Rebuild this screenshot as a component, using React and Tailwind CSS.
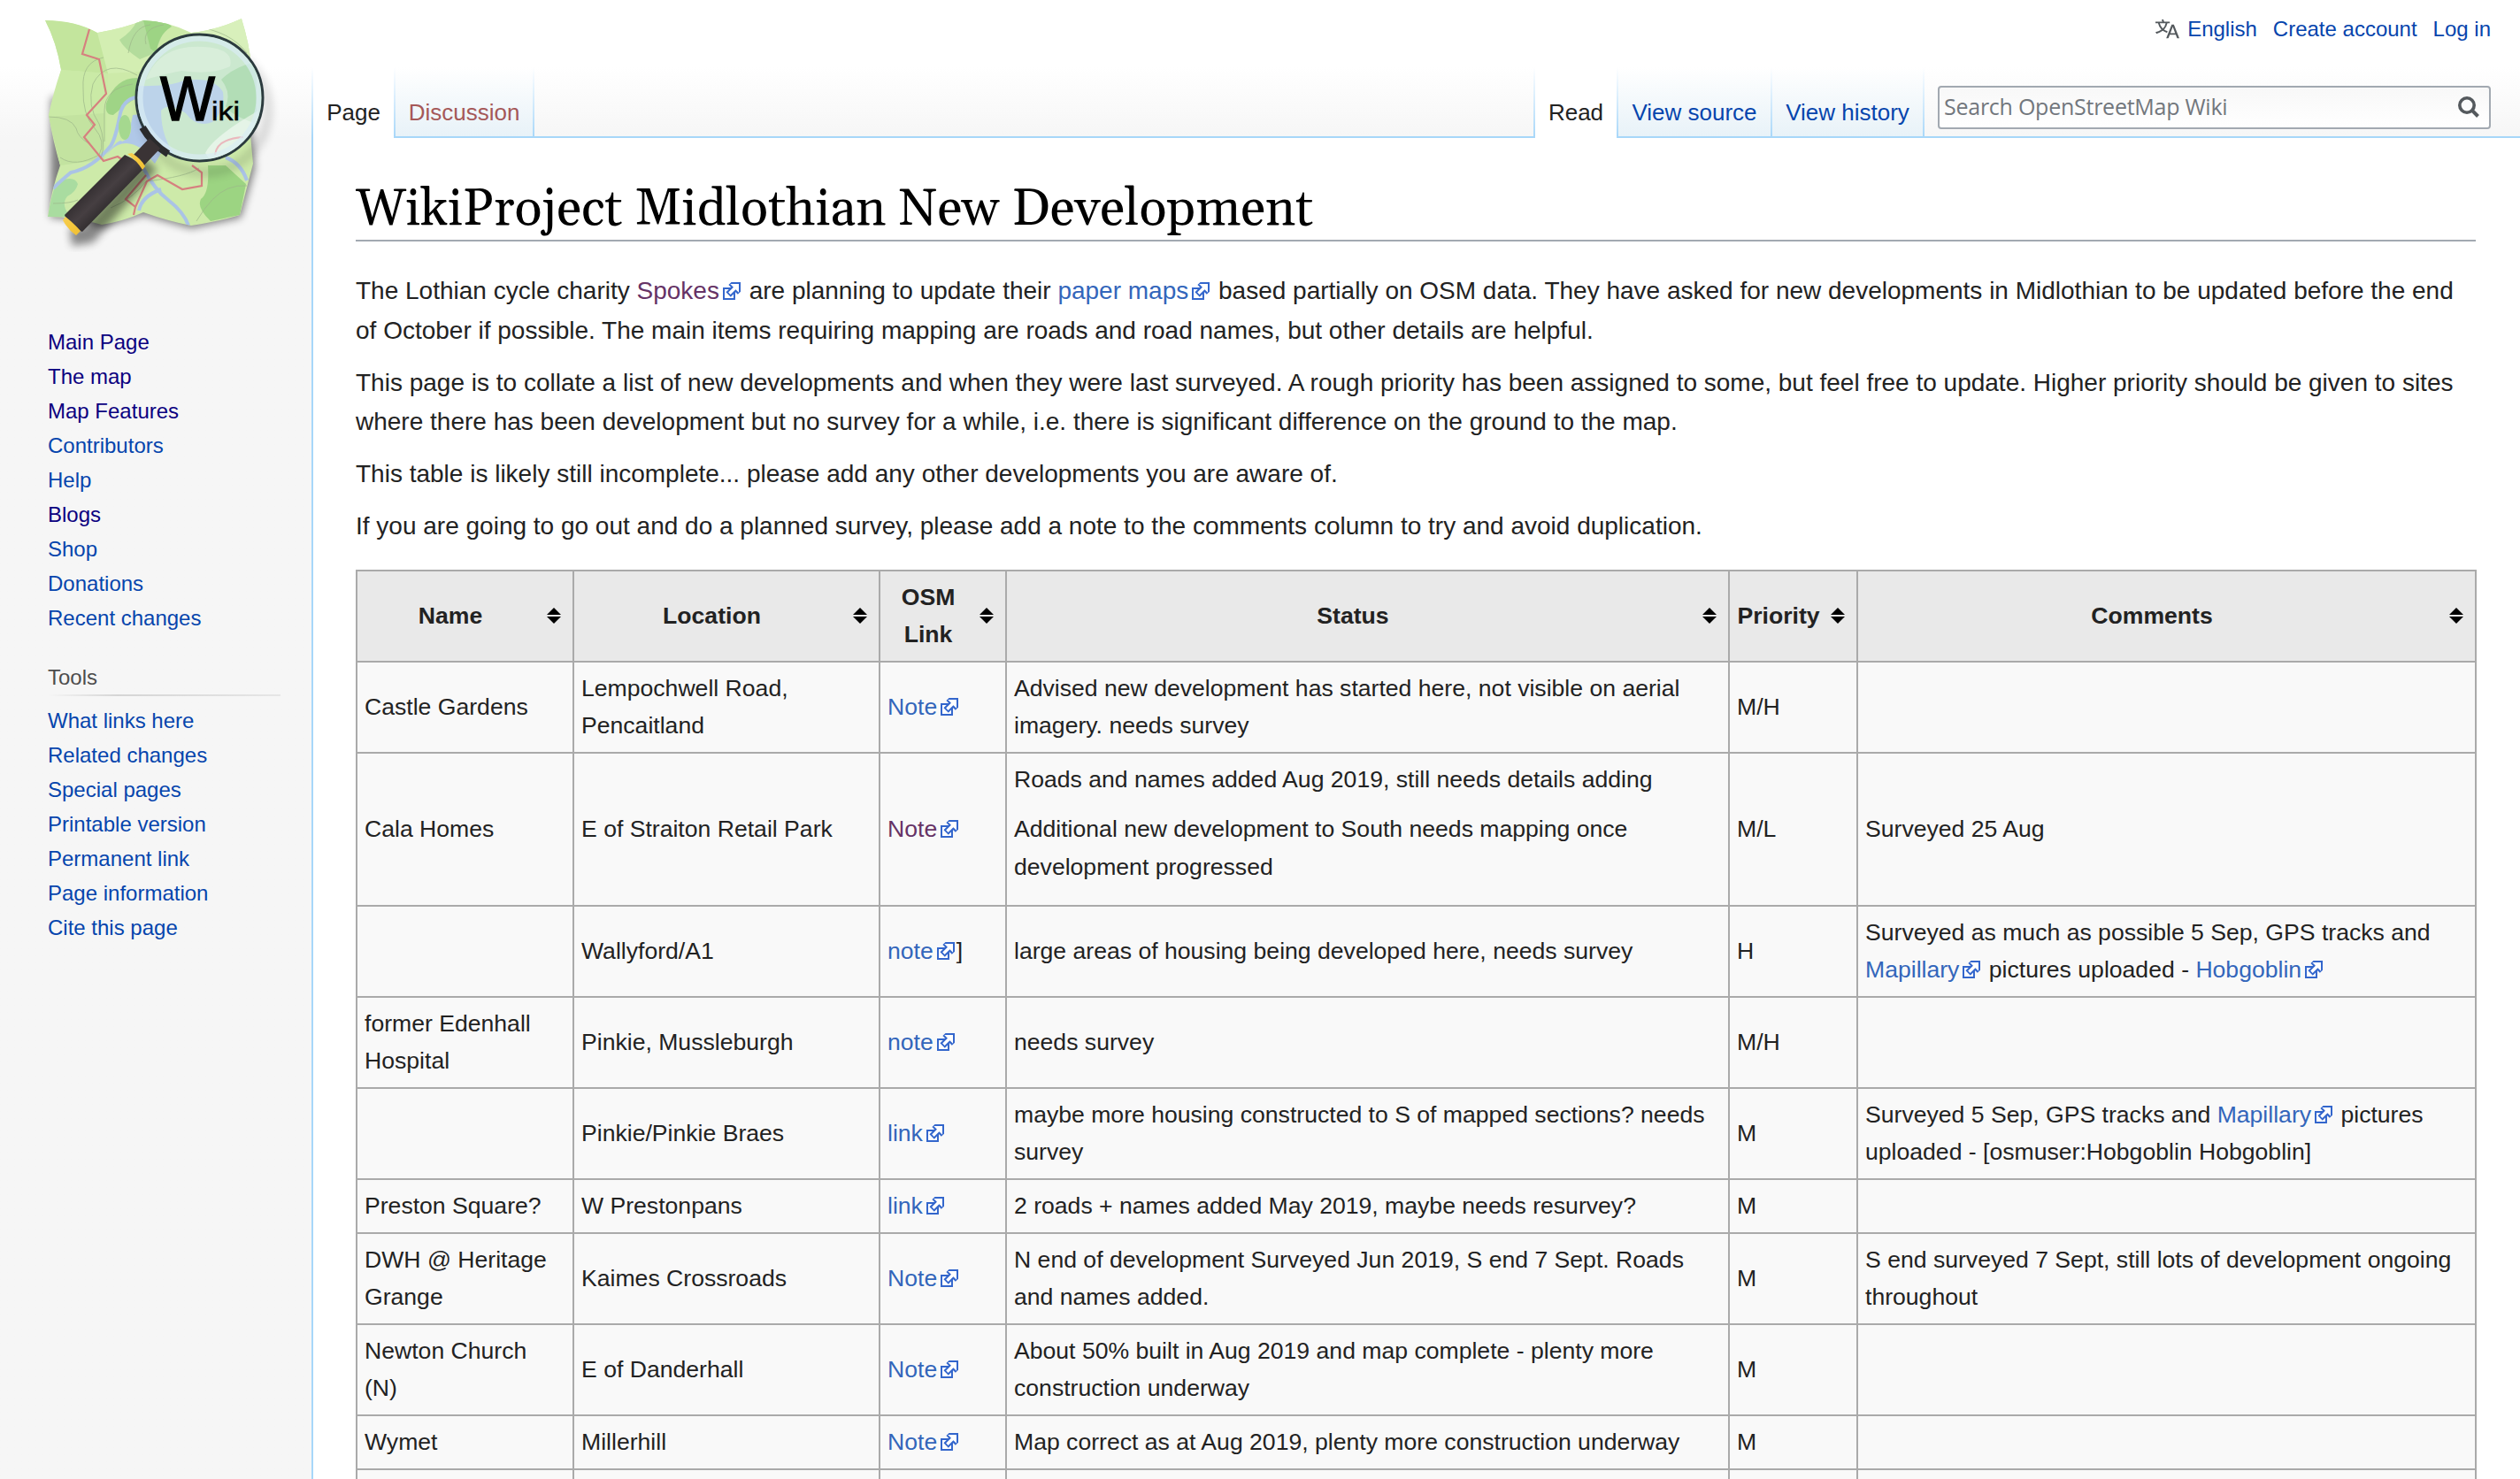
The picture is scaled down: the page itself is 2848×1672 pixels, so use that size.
import React from "react";

const cell = "border-2 border-[#aaaaaa] px-[8px] align-middle";

function Ext({ children, visited }) {
  return (
    <a className="whitespace-nowrap">
      <span className={visited ? "text-[#663366]" : "text-[#3366bb]"}>{children}</span>
      <svg className="mr-[2px] ml-[4px] inline-block h-[20px] w-[20px] align-[-1px]" viewBox="1 1 10 10">
        <path fill="#fff" stroke="#36c" d="M1.500 4.518h5.982V10.500H1.500z" />
        <path fill="#36c" d="M5.765 1H11v5.390L9.427 7.937l-1.310-1.310L5.393 9.350l-2.690-2.688 2.810-2.808L4.200 2.544z" />
        <path fill="#fff" d="m9.995 2.004.022 4.885L8.200 5.070 5.320 7.950 4.090 6.723l2.882-2.880-1.850-1.852z" />
      </svg>
    </a>
  );
}

function Sort() {
  return (
    <svg className="h-[18px] w-[16px] shrink-0" viewBox="0 0 16 18">
      <path d="M0 8L8 0l8 8zM0 10h16l-8 8z" />
    </svg>
  );
}

const cols = [
  ["Name", "w-[245px]"],
  ["Location", "w-[346px]"],
  ["OSM Link", "w-[143px]"],
  ["Status", "w-[817px]"],
  ["Priority", "w-[145px]"],
  ["Comments", "w-[699px]"],
];

const rows = [
  { h: "h-[103px]", c: ["Castle Gardens", "Lempochwell Road, Pencaitland", <Ext>Note</Ext>, "Advised new development has started here, not visible on aerial imagery. needs survey", "M/H", ""] },
  {
    h: "h-[173px]",
    c: ["Cala Homes", "E of Straiton Retail Park", <Ext visited>Note</Ext>, <div>Roads and names added Aug 2019, still needs details adding<p className="my-[13.300px]">Additional new development to South needs mapping once development progressed</p></div>, "M/L", "Surveyed 25 Aug"],
  },
  { h: "h-[103px]", c: ["", "Wallyford/A1", <><Ext>note</Ext>]</>, "large areas of housing being developed here, needs survey", "H", <>Surveyed as much as possible 5 Sep, GPS tracks and <Ext>Mapillary</Ext> pictures uploaded - <Ext>Hobgoblin</Ext></>] },
  { h: "h-[103px]", c: ["former Edenhall Hospital", "Pinkie, Mussleburgh", <Ext>note</Ext>, "needs survey", "M/H", ""] },
  { h: "h-[103px]", c: ["", "Pinkie/Pinkie Braes", <Ext>link</Ext>, "maybe more housing constructed to S of mapped sections? needs survey", "M", <>Surveyed 5 Sep, GPS tracks and <Ext>Mapillary</Ext> pictures uploaded - [osmuser:Hobgoblin Hobgoblin]</>] },
  { h: "h-[61px]", c: ["Preston Square?", "W Prestonpans", <Ext>link</Ext>, "2 roads + names added May 2019, maybe needs resurvey?", "M", ""] },
  { h: "h-[103px]", c: ["DWH @ Heritage Grange", "Kaimes Crossroads", <Ext>Note</Ext>, "N end of development Surveyed Jun 2019, S end 7 Sept. Roads and names added.", "M", "S end surveyed 7 Sept, still lots of development ongoing throughout"] },
  { h: "h-[103px]", c: ["Newton Church (N)", "E of Danderhall", <Ext>Note</Ext>, "About 50% built in Aug 2019 and map complete - plenty more construction underway", "M", ""] },
  { h: "h-[61px]", c: ["Wymet", "Millerhill", <Ext>Note</Ext>, "Map correct as at Aug 2019, plenty more construction underway", "M", ""] },
  { h: "h-[103px]", c: ["", "", "", "", "", ""] },
];

const nav = [
  ["Main Page", 1], ["The map", 1], ["Map Features", 1], ["Contributors", 0], ["Help", 0], ["Blogs", 1], ["Shop", 0], ["Donations", 0], ["Recent changes", 0],
];
const tools = ["What links here", "Related changes", "Special pages", "Printable version", "Permanent link", "Page information", "Cite this page"];

function Logo() {
  return (
    <svg className="h-[300px] w-[320px]" viewBox="0 0 320 300">
      <defs>
        <filter id="b" x="-20%" y="-20%" width="140%" height="140%"><feGaussianBlur stdDeviation="5" /></filter>
        <linearGradient id="h" x1="0" y1="0" x2="1" y2="1"><stop offset="0.3" stopColor="#2a2628" /><stop offset="0.5" stopColor="#463f42" /><stop offset="0.75" stopColor="#1d1b1c" /></linearGradient>
        <linearGradient id="g" x1="0" y1="0" x2="1" y2="1"><stop offset="0" stopColor="#fbe9a8" /><stop offset="0.5" stopColor="#f5c73c" /><stop offset="1" stopColor="#d9a016" /></linearGradient>
        <clipPath id="m"><path d="M51 23Q85 23 110 37Q140 32 162 23Q190 24 216 37Q245 34 273 21Q282 50 284 75L281 130L286 185L271 243Q250 250 216 255Q190 250 162 240Q140 250 115 254Q85 245 54 245Q58 215 68 187Q60 160 55 130Q60 105 69 79Q64 48 51 23Z" /></clipPath>
        <clipPath id="l"><circle cx="225.500" cy="110.500" r="70" /></clipPath>
      </defs>
      <path d="M58 110L57 246Q85 246 115 257L162 243L216 258L272 246L288 190L280 100Z" fill="#000" opacity="0.5" filter="url(#b)" />
      <g clipPath="url(#m)">
        <rect width="320" height="300" fill="#cdeaa9" />
        <path d="M51 23Q85 23 110 37Q124 60 122 83L69 79Z" fill="#c3e59d" />
        <path d="M110 37L162 23L175 80L122 83Z" fill="#d3eeb2" />
        <path d="M69 79L122 83L120 180L68 187L55 130Z" fill="#caeaa6" />
        <path d="M55 132L118 128L118 180L68 187Z" fill="#c3e3a0" />
        <path d="M216 37L273 21L290 80L240 60Z" fill="#d8f0bb" />
        <path d="M135 45Q150 35 155 23H190L175 60L158 67Q140 55 135 45Z" fill="#b3dc9c" />
        <path d="M162 23Q190 24 194 30Q178 40 177 60L170 55Z" fill="#9dd484" />
        <path d="M155 88Q130 88 120 117Q118 130 128 130Q142 118 155 110Z" fill="#9fd486" />
        <path d="M54 245Q58 220 64 206Q84 197 88 208Q86 217 76 222Q68 232 80 245Z" fill="#a9dca0" />
        <path d="M235 187L255 187L278 208L271 243L238 250Q222 235 227 225Q237 218 235 187Z" fill="#9cd482" />
        <path d="M150 130Q170 125 190 160L175 185L160 168Q140 155 125 170L120 175Q135 155 138 160Q150 155 148 140Z" fill="#b0c8e8" />
        <path d="M155 110Q138 112 135 133Q130 158 125 165Q105 190 80 195Q68 205 60 213M162 190Q175 215 190 226Q208 240 213 255M182 214Q160 222 157 238M255 178Q272 184 279 204" fill="none" stroke="#aac3e6" strokeWidth="4" />
        <ellipse cx="141" cy="144" rx="7" ry="14" fill="#a5d88f" />
        <g fill="none" stroke="#9db68a" strokeWidth="1" opacity="0.7">
          <path d="M117 65Q92 70 94 100Q93 130 107 145Q120 160 112 175Q85 190 68 178" />
          <path d="M155 85Q120 65 105 95Q98 120 112 140Q120 160 114 180" />
          <path d="M150 95Q118 100 118 125L118 160M55 132Q80 132 86 145Q88 155 100 162" />
          <path d="M145 60Q150 30 170 28M165 50Q160 32 185 28M220 30Q260 35 279 60M222 250Q240 220 258 213Q268 209 279 210M60 230Q80 230 88 226M125 235Q150 225 165 205Q210 200 225 190" />
        </g>
        <path d="M101 33L93 61L112 67L120 106L98 130L107 141L95 155L117 182L133 177L142 183L153 190M165 198L142 225L153 234L151 243M153 234L166 205L178 198L206 214L228 210V195L217 187" fill="none" stroke="#d6807f" strokeWidth="2.200" />
      </g>
      <circle cx="232" cy="124" r="71" fill="none" stroke="#000" strokeWidth="10" opacity="0.13" filter="url(#b)" />
      <path d="M170 185L100 265L80 268" fill="none" stroke="#000" strokeWidth="20" opacity="0.45" filter="url(#b)" />
      <circle cx="225.500" cy="110.500" r="71.500" fill="#cbe8cf" stroke="#2b3a3e" strokeWidth="3" />
      <g clipPath="url(#l)">
        <path d="M154 97Q190 98 205 92Q240 85 252 104Q255 125 240 138Q222 145 210 128Q190 115 182 125Q182 160 205 185H150Z" fill="#bcd3ea" />
        <path d="M250 90Q265 75 290 70V140Q260 130 255 120Q262 105 250 90Z" fill="#b2ddb6" />
        <path d="M165 90Q180 50 230 53Q265 55 260 75Q240 85 205 80Q180 85 165 90Z" fill="#e4f3e3" opacity="0.55" />
        <path d="M232 173Q240 155 292 125L285 165L240 185Z" fill="#fff" opacity="0.5" />
        <path d="M243 175Q245 157 275 155" fill="none" stroke="#eab8bd" strokeWidth="2" />
        <circle cx="225.500" cy="110.500" r="67" fill="none" stroke="#d8edf3" strokeWidth="6" opacity="0.7" />
      </g>
      <path d="M161 144Q172 163 190 174" fill="none" stroke="#2a2a2c" strokeWidth="8" />
      <path d="M175 162L155 183" stroke="#3a3335" strokeWidth="17" />
      <path d="M141 175Q157 182 162 191L93 262Q77 256 73 243Z" fill="url(#h)" />
      <path d="M144 174L149 173Q160 180 164 188L161 192Q155 182 144 174ZM74 245Q83 252 91 261L86 266Q77 260 71 249Z" fill="url(#g)" />
      <text x="181" y="136" fontFamily="Liberation Sans, Arial, sans-serif" fontSize="70" stroke="#000" strokeWidth="1.500" textLength="62" lengthAdjust="spacingAndGlyphs">W</text>
      <text x="239" y="136" fontFamily="Liberation Sans, Arial, sans-serif" fontSize="30" stroke="#000" strokeWidth="0.500" textLength="32" lengthAdjust="spacingAndGlyphs">iki</text>
    </svg>
  );
}

function Divider() {
  return <div className="w-[2px] shrink-0 self-stretch bg-linear-to-b from-white to-[#a7d7f9]" />;
}

function Tab({ children, active, color, w }) {
  return (
    <>
      <div className={`${w} flex justify-center pt-[33px] text-[26px] leading-[36px] ${color} ${active ? "bg-white" : "border-b-2 border-[#a7d7f9] bg-linear-to-b from-white to-[#e8f2f8]"}`}>{children}</div>
      <Divider />
    </>
  );
}

export default function App() {
  return (
    <div className="flex h-[1672px] w-[2848px] overflow-hidden bg-[#f6f6f6] font-['Liberation_Sans',Arial,sans-serif] text-[#222222]">
      <aside className="flex w-[352px] shrink-0 flex-col bg-linear-to-b from-white from-[76px] to-[#f6f6f6] to-[156px]">
        <Logo />
        <ul className="mt-[67px] pl-[54px] text-[24px] leading-[39px] whitespace-nowrap">
          {nav.map(([t, v]) => <li key={t} className={v ? "text-[#0b0080]" : "text-[#0645ad]"}>{t}</li>)}
        </ul>
        <h3 className="mt-[28px] pl-[54px] text-[24px] leading-[39px] text-[#4d4d4d]">Tools</h3>
        <div className="ml-[54px] h-[2px] w-[263px] bg-linear-to-r from-[#f6f6f6] via-[#d5d5d5] via-30% to-[#e6e6e6]" />
        <ul className="mt-[8px] pl-[54px] text-[24px] leading-[39px] whitespace-nowrap text-[#0645ad]">
          {tools.map((t) => <li key={t}>{t}</li>)}
        </ul>
      </aside>
      <div className="flex w-[2496px] flex-col">
        <header className="flex h-[156px] bg-linear-to-b from-white from-[76px] to-[#f6f6f6]">
          <div className="mt-[76px] flex">
            <Divider />
            <Tab active w="w-[91px]" color="text-[#222222]">Page</Tab>
            <Tab w="w-[155px]" color="text-[#a55858]">Discussion</Tab>
          </div>
          <div className="flex-1 border-b-2 border-[#a7d7f9]" />
          <div className="flex flex-col">
            <div className="flex h-[76px] items-center justify-end gap-[18px] pr-[33px] pb-[11px] text-[24px] text-[#0645ad]">
              <span className="flex items-center gap-[9px]">
                <svg className="h-[27px] w-[27px]" viewBox="0 0 20 20" fill="#54595d"><path d="M20 18h-1.440a.6.6 0 0 1-.4-.12.8.8 0 0 1-.23-.31L17 15h-5l-1 2.540a.8.8 0 0 1-.22.3.6.6 0 0 1-.4.14H9l4.550-11.470h1.890zm-3.530-4.310L14.890 9.500a12 12 0 0 1-.39-1.240q-.09.37-.19.69l-.19.560-1.580 4.190zm-6.300-1.580a13.400 13.400 0 0 1-2.910-1.410 11.500 11.500 0 0 0 2.810-5.370H12V4H7.310a4 4 0 0 0-.2-.56C6.870 2.790 6.600 2 6.600 2l-1.470.5s.4.890.6 1.500H0v1.330h2.150A11.200 11.200 0 0 0 5 10.700a17.200 17.200 0 0 1-5 2.100q.56.820.87 1.380a23.300 23.300 0 0 0 5.220-2.510 15.600 15.600 0 0 0 3.560 1.770zM3.630 5.330h4.910a8.100 8.100 0 0 1-2.450 4.450 9.100 9.100 0 0 1-2.460-4.450" /></svg>
                English
              </span>
              <span>Create account</span>
              <span>Log in</span>
            </div>
            <div className="flex h-[80px]">
              <Divider />
              <Tab active w="w-[92px]" color="text-[#222222]">Read</Tab>
              <Tab w="w-[172px]" color="text-[#0645ad]">View source</Tab>
              <Tab w="w-[170px]" color="text-[#0645ad]">View history</Tab>
              <div className="w-[673px] border-b-2 border-[#a7d7f9] pt-[21px] pl-[15px]">
                <div className="flex h-[49px] w-[625px] items-center justify-between rounded-[4px] border-2 border-[#a2a9b1] bg-linear-to-b from-[#f8f8f8] to-white pr-[11px] pb-[2px] pl-[5px] font-['Open_Sans','Noto_Sans',sans-serif] text-[25px] tracking-[-0.250px] text-[#72777d]">
                  <span>Search OpenStreetMap Wiki</span>
                  <svg className="h-[24px] w-[24px]" viewBox="0 0 24 24" fill="none" stroke="#54595d"><circle cx="10" cy="10" r="8.200" strokeWidth="3.600" /><path d="M15.500 15.500l7 7" strokeWidth="4" /></svg>
                </div>
              </div>
            </div>
          </div>
        </header>
        <main className="flex-1 border-l-2 border-[#a7d7f9] bg-white pr-[50px] pl-[48px]">
          <h1 className="mt-[42px] h-[75px] border-b-2 border-[#a2a9b1] pt-[5px] font-['Gelasio',Georgia,'Liberation_Serif',serif] text-[57.600px] leading-[70px] whitespace-nowrap text-black">WikiProject Midlothian New Development</h1>
          <div className="mt-[34px] flex flex-col gap-[14px] text-[28px] leading-[44.800px]">
            <p>The Lothian cycle charity <Ext visited>Spokes</Ext> are planning to update their <Ext>paper maps</Ext> based partially on OSM data. They have asked for new developments in Midlothian to be updated before the end of October if possible. The main items requiring mapping are roads and road names, but other details are helpful.</p>
            <p>This page is to collate a list of new developments and when they were last surveyed. A rough priority has been assigned to some, but feel free to update. Higher priority should be given to sites where there has been development but no survey for a while, i.e. there is significant difference on the ground to the map.</p>
            <p>This table is likely still incomplete... please add any other developments you are aware of.</p>
            <p>If you are going to go out and do a planned survey, please add a note to the comments column to try and avoid duplication.</p>
          </div>
          <table className="mt-[26px] w-[2397px] table-fixed border-collapse bg-[#f9f9f9] text-[26.600px] leading-[42.560px]">
            <thead>
              <tr className="h-[103px] bg-[#e9e9e9]">
                {cols.map(([t, w]) => (
                  <th key={t} className={`${w} border-2 border-[#aaaaaa] pr-[13px] pl-[8px] font-bold`}>
                    <div className="flex items-center"><span className="mr-[12px] min-w-0 flex-1">{t}</span><Sort /></div>
                  </th>
                ))}
              </tr>
            </thead>
            <tbody>
              {rows.map((r, i) => (
                <tr key={i} className={r.h}>{r.c.map((c, j) => <td key={j} className={cell}>{c}</td>)}</tr>
              ))}
            </tbody>
          </table>
        </main>
      </div>
    </div>
  );
}
